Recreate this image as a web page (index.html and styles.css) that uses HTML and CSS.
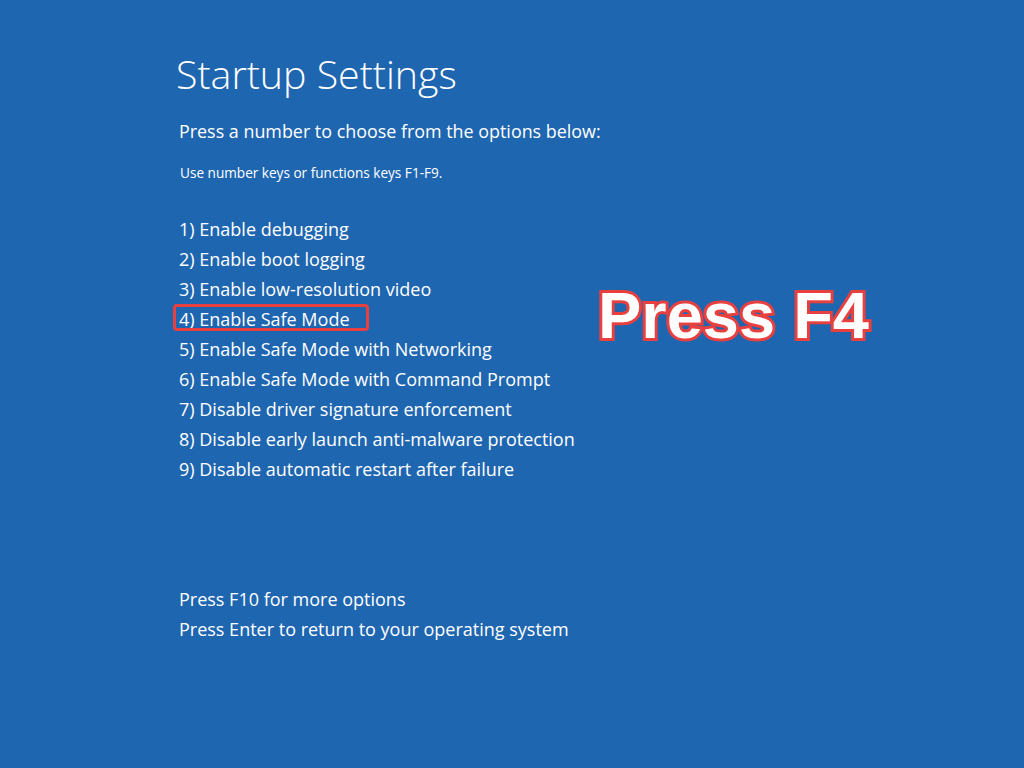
FILE: index.html
```html
<!DOCTYPE html>
<html>
<head>
<meta charset="utf-8">
<link rel="stylesheet" href="styles.css">
</head>
<body>
<main class="screen">
  <h1 class="title">Startup Settings</h1>
  <p class="lead">Press a number to choose from the options below:</p>
  <p class="hint">Use number keys or functions keys F1-F9.</p>
  <ol class="options">
    <li>1) Enable debugging</li>
    <li>2) Enable boot logging</li>
    <li>3) Enable low-resolution video</li>
    <li><span class="marked">4) Enable Safe Mode</span></li>
    <li>5) Enable Safe Mode with Networking</li>
    <li>6) Enable Safe Mode with Command Prompt</li>
    <li>7) Disable driver signature enforcement</li>
    <li>8) Disable early launch anti-malware protection</li>
    <li>9) Disable automatic restart after failure</li>
  </ol>
  <div class="footer">
    <p>Press F10 for more options</p>
    <p>Press Enter to return to your operating system</p>
  </div>
  <div class="callout">Press F4</div>
</main>
</body>
</html>
```
FILE: styles.css
```css
html, body {
  margin: 0;
  padding: 0;
}
body {
  width: 1024px;
  height: 768px;
  background: #1f66b1;
  overflow: hidden;
}
.screen {
  position: relative;
  height: 768px;
  box-sizing: border-box;
  padding: 48px 0 0 179px;
  color: #ffffff;
  font-family: "Open Sans", "Noto Sans", sans-serif;
}
.title {
  margin: 0 0 0 -3px;
  font-weight: 300;
  font-size: 39.3px;
  line-height: 52px;
  letter-spacing: 0;
}
.lead {
  margin: 16px 0 0;
  font-size: 17.9px;
  line-height: 30px;
}
.hint {
  margin: 18px 0 0;
  font-size: 13.6px;
  line-height: 18px;
  padding-left: 1px;
}
.options {
  list-style: none;
  margin: 32px 0 0;
  padding: 0;
  font-size: 18px;
  line-height: 30px;
}
.marked {
  position: relative;
}
.marked::after {
  content: "";
  position: absolute;
  left: -6px;
  right: -19px;
  top: -3px;
  bottom: 0;
  border: 3px solid #e8403f;
  border-radius: 4px;
}
.footer {
  margin-top: 100px;
  font-size: 18px;
  line-height: 30px;
}
.footer p {
  margin: 0;
}
.callout {
  position: absolute;
  left: 598px;
  top: 276px;
  font-family: "Liberation Sans", Arial, sans-serif;
  font-weight: 700;
  font-size: 65px;
  line-height: 80px;
  color: #ffffff;
  -webkit-text-stroke: 6px #e8403f;
  paint-order: stroke fill;
}
```
